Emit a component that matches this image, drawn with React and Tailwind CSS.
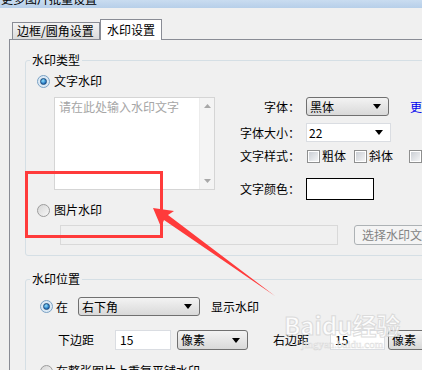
import React from 'react';

const Caret = () => (
    <svg width="8" height="5" viewBox="0 0 8 5" className="shrink-0">
        <polygon points="0,0 8,0 4,5" fill="#000" />
    </svg>
);

const Radio = ({ checked, className = '' }) => (
    <span
        className={`flex h-[13px] w-[13px] shrink-0 items-center justify-center rounded-full border ${
            checked ? 'border-[#7ba2c4] bg-[#dbe9f5]' : 'border-[#9c9c9c] bg-linear-to-br from-[#d6d6d6] to-[#f7f7f7]'
        } ${className}`}
    >
        {checked && (
            <span className="h-[7px] w-[7px] rounded-full border border-[#1d4e7d] bg-[radial-gradient(circle_at_40%_35%,#8fe2ff,#1766b8_75%)]" />
        )}
    </span>
);

const Checkbox = ({ className = '' }) => (
    <span className={`flex h-[13px] w-[13px] shrink-0 items-center justify-center border border-[#8e8f8f] bg-white ${className}`}>
        <span className="h-[9px] w-[9px] bg-linear-to-br from-[#cbcfd5] to-[#f4f5f6]" />
    </span>
);

// button-like combo (黑体 / 右下角 / 像素)
const Combo = ({ value, className = '' }) => (
    <div
        className={`flex shrink-0 items-center justify-between rounded-[3px] border border-[#707070] bg-linear-to-b from-[#f3f3f3] to-[#d9d9d9] pl-[3px] pr-[7px] ${className}`}
    >
        <span>{value}</span>
        <Caret />
    </div>
);

export default function App() {
    return (
        <div className="relative h-[370px] w-[422px] overflow-hidden bg-[#f0f0f0] font-['Noto_Sans_CJK_SC',sans-serif] text-[12px] leading-[14px] text-black">
            {/* title bar, mostly cut off */}
            <div className="h-[8px] overflow-hidden bg-linear-to-b from-[#c9dcf0] to-[#b7cfe9]">
                <div className="-mt-[8px] whitespace-nowrap pl-[1px]">更多图片批量设置</div>
            </div>

            {/* tabs */}
            <div className="mt-[11px] flex h-[20px] items-end pl-[12px]">
                <div className="h-[17px] w-[88px] shrink-0 whitespace-nowrap border border-b-0 border-[#898c95] bg-linear-to-b from-[#f3f3f3] to-[#dcdcdc] pl-[4px] leading-[16px]">
                    边框/圆角设置
                </div>
                <div className="relative z-10 -mb-px h-[21px] w-[62px] shrink-0 whitespace-nowrap border border-b-0 border-[#898c95] bg-white pl-[6px] leading-[19px]">
                    水印设置
                </div>
            </div>

            {/* tab panel */}
            <div className="ml-[9px] border-l border-t border-[#898c95] pl-[15px] pt-[13px]">
                {/* 水印类型 */}
                <fieldset className="w-[480px] rounded-[3px] border border-[#d5dfe5] pb-[10px]">
                    <legend className="ml-[4px] px-[2px] leading-[14px]">水印类型</legend>

                    <div className="mt-[7px] flex items-center">
                        <Radio checked className="ml-[11px]" />
                        <span className="ml-[4px]">文字水印</span>
                    </div>

                    <div className="mt-[9px] flex items-start">
                        {/* textarea */}
                        <div className="ml-[28px] flex h-[93px] w-[161px] shrink-0 border border-[#d5d5d5] bg-white">
                            <div className="flex-1 pl-[4px] pt-[2px] text-[#a6a6a6]">请在此处输入水印文字</div>
                            <div className="flex w-[15px] flex-col items-center justify-between border-l border-[#ececec] bg-[#f4f4f4] py-[6px]">
                                <svg width="7" height="4" viewBox="0 0 7 4">
                                    <polygon points="0,4 7,4 3.5,0" fill="#a8a8a8" />
                                </svg>
                                <svg width="7" height="4" viewBox="0 0 7 4">
                                    <polygon points="0,0 7,0 3.5,4" fill="#a8a8a8" />
                                </svg>
                            </div>
                        </div>

                        {/* font settings */}
                        <div className="ml-[25px] flex shrink-0 flex-col">
                            <div className="flex h-[19px] items-center">
                                <span className="w-[60px] text-right">字体：</span>
                                <Combo value="黑体" className="ml-[6px] h-[19px] w-[83px]" />
                                <span className="ml-[21px] text-[#0000ee]">更多</span>
                            </div>
                            <div className="mt-[7px] flex h-[19px] items-center">
                                <span className="w-[60px] text-right">字体大小：</span>
                                <div className="ml-[6px] flex h-[19px] w-[85px] items-center justify-between border border-[#dadde2] bg-white pl-[2px] pr-[7px]">
                                    <span>22</span>
                                    <Caret />
                                </div>
                            </div>
                            <div className="mt-[6px] flex h-[16px] items-center">
                                <span className="w-[60px] text-right">文字样式：</span>
                                <Checkbox className="ml-[7px]" />
                                <span className="ml-[2px]">粗体</span>
                                <Checkbox className="ml-[8px]" />
                                <span className="ml-[2px]">斜体</span>
                                <Checkbox className="ml-[16px]" />
                                <span className="ml-[2px]">下划线</span>
                            </div>
                            <div className="mt-[14px] flex h-[22px] items-center">
                                <span className="w-[60px] text-right">文字颜色：</span>
                                <div className="ml-[6px] h-[22px] w-[68px] border border-black bg-white" />
                            </div>
                        </div>
                    </div>

                    <div className="mt-[3px] flex items-center">
                        <Radio className="ml-[11px]" />
                        <span className="ml-[4px]">图片水印</span>
                    </div>

                    <div className="mt-[8px] flex items-center">
                        <div className="ml-[34px] h-[20px] w-[278px] shrink-0 border border-[#d9d9d9] bg-[#f0f0f0]" />
                        <div className="ml-[16px] flex h-[20px] w-[84px] shrink-0 items-center whitespace-nowrap rounded-[3px] border border-[#adb2b5] bg-[#f4f4f4] pl-[7px] text-[#838383]">
                            选择水印文件
                        </div>
                    </div>
                </fieldset>

                {/* 水印位置 */}
                <fieldset className="mt-[16px] w-[480px] rounded-[3px] border border-[#d5dfe5] pb-[10px]">
                    <legend className="ml-[4px] px-[2px] leading-[14px]">水印位置</legend>

                    <div className="mt-[11px] flex h-[19px] items-center">
                        <Radio checked className="ml-[14px]" />
                        <span className="ml-[3px] shrink-0">在</span>
                        <Combo value="右下角" className="ml-[10px] h-[19px] w-[122px]" />
                        <span className="ml-[11px] shrink-0">显示水印</span>
                    </div>

                    <div className="mt-[14px] flex h-[20px] items-center">
                        <span className="ml-[32px] w-[36px] shrink-0">下边距</span>
                        <div className="ml-[21px] flex h-[20px] w-[56px] shrink-0 items-center border border-[#dadde2] bg-white pl-[4px]">15</div>
                        <Combo value="像素" className="ml-[6px] h-[20px] w-[71px]" />
                        <span className="ml-[25px] w-[36px] shrink-0">右边距</span>
                        <div className="ml-[21px] flex h-[20px] w-[55px] shrink-0 items-center border border-[#dadde2] bg-white pl-[4px]">15</div>
                        <Combo value="像素" className="ml-[3px] h-[20px] w-[71px]" />
                    </div>

                    <div className="mt-[14px] flex items-center">
                        <Radio className="ml-[14px]" />
                        <span className="ml-[3px] whitespace-nowrap">在整张图片上重复平铺水印</span>
                    </div>
                </fieldset>
            </div>

            {/* annotation: red box and arrow */}
            <div className="absolute left-[25px] top-[171px] h-[67px] w-[138px] border-[3px] border-[#ff3b3b]" />
            <svg className="pointer-events-none absolute left-0 top-0" width="422" height="370" viewBox="0 0 422 370">
                <polygon points="153,208 174,211 168,215 275,296 164,220 161,227" fill="#ff3b3b" />
            </svg>

            {/* site watermark */}
            <div className="pointer-events-none absolute left-[284px] top-[312px] flex flex-col items-center opacity-80">
                <span className="text-[24px] font-bold leading-[26px] text-white [-webkit-text-stroke:1px_#d6d6d6]">Baidu经验</span>
                <span className="font-['Liberation_Serif',serif] text-[11px] leading-[12px] text-white [-webkit-text-stroke:0.5px_#d6d6d6]">jingyan.baidu.com</span>
            </div>
        </div>
    );
}
